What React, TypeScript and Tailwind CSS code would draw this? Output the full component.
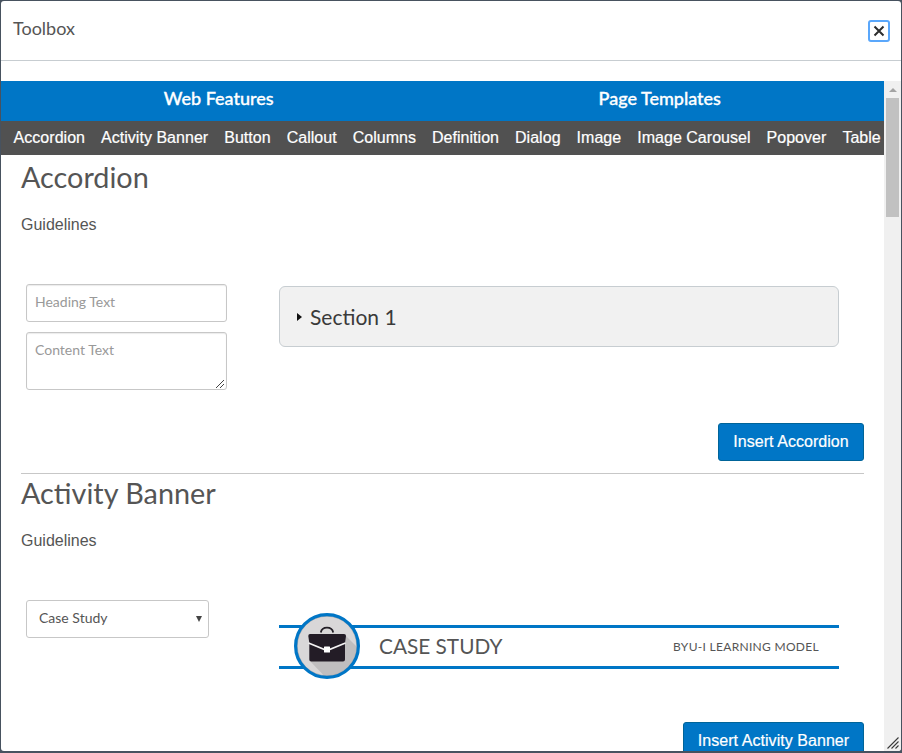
import React from "react";

const navItems = [
  "Accordion", "Activity Banner", "Button", "Callout", "Columns", "Definition",
  "Dialog", "Image", "Image Carousel", "Popover", "Table",
];

const lato = "font-['Lato','Liberation_Sans',sans-serif]";

function Grip({ className }: { className: string }) {
  return (
    <svg className={className} viewBox="0 0 9 9" width="9" height="9" shapeRendering="crispEdges">
      {[8, 7, 6, 5, 4, 3, 2, 1].map((n) => (
        <rect key={n} x={8 - n} y={n} width="1" height="1" fill="#444" />
      ))}
      {[8, 7, 6, 5].map((n) => (
        <rect key={n} x={12 - n} y={n} width="1" height="1" fill="#444" />
      ))}
    </svg>
  );
}

function DialogGrip() {
  return (
    <svg className="h-3 w-3" viewBox="0 0 12 12" fill="none" stroke="#3a3a3a" strokeWidth="1.1">
      <path d="M.5 11.5 11.5.5M4.5 11.5l7-7M8.5 11.5l3-3" />
    </svg>
  );
}

function Heading({ children }: { children: React.ReactNode }) {
  return <h2 className={`${lato} h-[43px] text-[28.8px] leading-[45px] text-[#555]`}>{children}</h2>;
}

function InsertButton({ label, width }: { label: string; width: string }) {
  return (
    <button className={`${width} h-[38px] rounded-[3px] border border-[#006499] bg-[#0076c6] text-center text-[16px] leading-[34px] tracking-[0.05px] whitespace-nowrap text-white [-webkit-text-stroke:0.2px_white]`}>
      {label}
    </button>
  );
}

function BriefcaseBadge() {
  return (
    <svg className="absolute top-[-15px] left-[15px] h-[66px] w-[66px]" viewBox="0 0 66 66">
      <defs>
        <clipPath id="disc"><circle cx="33" cy="33" r="30" /></clipPath>
      </defs>
      <circle cx="33" cy="33" r="31.5" fill="#d9d7d8" />
      <g clipPath="url(#disc)">
        <path d="M51 22 70 41V70H37L15 47Z" fill="#c0bebf" />
      </g>
      <circle cx="33" cy="33" r="29.8" fill="none" stroke="#b5afae" strokeWidth="1" />
      <circle cx="33" cy="33" r="31.4" fill="none" stroke="#0076c6" strokeWidth="3.200" />
      <path d="M26.8 19.5c.6-3 3-4.8 6.2-4.8s5.600 1.800 6.200 4.800" fill="none" stroke="#231f26" strokeWidth="1.8" />
      <path d="M16 21h34q2 0 2 2l-1 7v16.500q0 2-2 2H17.300q-2 0-2-2V30l-1-7q0-2 1.700-2Z" fill="#231c26" />
      <path d="M14.500 30 33 37.500 51.500 30" fill="none" stroke="#f4f2f3" strokeWidth="1.700" />
      <rect x="30" y="33.500" width="6" height="6" rx=".5" fill="#fff" />
    </svg>
  );
}

export default function App() {
  return (
    <div className="h-[753px] w-[902px] overflow-hidden bg-[#47525f] p-px pb-0.5 font-['Liberation_Sans',Arial,sans-serif] text-[#555]">
      <div className="flex h-[750px] flex-col overflow-hidden rounded-[3px] bg-white">
        <header className="flex h-[60px] shrink-0 items-start justify-between border-b border-[#c7cdd1] pr-[11px] pl-3">
          <span className={`${lato} mt-[15px] text-[18px] leading-6`}>Toolbox</span>
          <button className="mt-[19px] flex h-[22px] w-[22px] items-center justify-center rounded-[3px] border-2 border-[#5aa7fb] bg-white">
            <svg width="12" height="12" viewBox="0 0 12 12" stroke="#2d2d2d" strokeWidth="2" fill="none"><path d="M1.500 1.500 10.500 10.500M10.500 1.500 1.500 10.500" /></svg>
          </button>
        </header>
        <div className="mt-5 flex min-h-0 flex-1">
          <main className="w-[883px] overflow-hidden">
            <div className={`${lato} grid h-10 grid-cols-2 bg-[#0076c6] text-center text-[18px] leading-[35px] font-medium text-white [-webkit-text-stroke:0.35px_white]`}>
              <span className="pr-1.5">Web Features</span>
              <span className="pr-[7px]">Page Templates</span>
            </div>
            <nav className="flex h-[34px] gap-4 bg-[#515151] pl-[12.600px] text-[16px] leading-[33px] tracking-[0.03px] whitespace-nowrap text-white [-webkit-text-stroke:0.2px_white]">
              {navItems.map((n) => <span key={n}>{n}</span>)}
            </nav>

            <section className="mr-5 ml-5 h-[319px] border-b border-[#c7c7c7]">
              <Heading>Accordion</Heading>
              <p className="mt-[15px] h-6 text-[16px] leading-6">Guidelines</p>
              <div className="mt-[47px] flex h-[106px]">
                <div className="ml-[5px] flex w-[201px] flex-col gap-2.5">
                  <div className={`${lato} h-[38px] rounded-[3px] border border-[#c7c7c7] pl-2 text-[14px] leading-[33px] text-[#999] shadow-[inset_0_1px_1px_rgba(0,0,0,0.08)]`}>Heading Text</div>
                  <div className={`${lato} relative h-[58px] rounded-[3px] border border-[#c7c7c7] pl-2 text-[14px] leading-[33px] text-[#999] shadow-[inset_0_1px_1px_rgba(0,0,0,0.08)]`}>
                    Content Text
                    <Grip className="absolute right-px bottom-px" />
                  </div>
                </div>
                <div className={`${lato} mt-0.5 ml-[52px] flex h-[61px] w-[560px] items-center rounded-md border border-[#c7cdd1] bg-[#f1f1f1] pl-[17px] text-[21px] text-[#3a3a3a]`}>
                  <svg width="5" height="8" viewBox="0 0 5 8" fill="#111"><path d="M0 0v8l5-4Z" /></svg>
                  <span className="ml-2">Section 1</span>
                </div>
              </div>
              <div className="mt-[33px] flex justify-end">
                <InsertButton label="Insert Accordion" width="w-[146px]" />
              </div>
            </section>

            <section className="mr-5 ml-5">
              <div className="-mt-[3px]"><Heading>Activity Banner</Heading></div>
              <p className="mt-[15px] h-6 text-[16px] leading-6">Guidelines</p>
              <div className="mt-[47px] flex h-[106px]">
                <div className={`${lato} ml-[5px] flex h-[38px] w-[183px] items-start justify-between rounded-[3px] border border-[#c7c7c7] pr-1.5 pl-3 text-[14px] leading-[33px]`}>
                  Case Study
                  <svg className="mt-[15px]" width="6" height="6" viewBox="0 0 6 6" fill="#444"><path d="M0 0h6L3 6Z" /></svg>
                </div>
                <div className={`${lato} relative mt-[25px] ml-[70px] flex h-11 w-[560px] items-center justify-between border-y-[3px] border-[#0076c6] pr-5 pl-[100px]`}>
                  <BriefcaseBadge />
                  <span className="pb-0.5 text-[20.800px]">CASE STUDY</span>
                  <span className="text-[12px] tracking-[0.3px]">BYU-I LEARNING MODEL</span>
                </div>
              </div>
              <div className="mt-4 flex justify-end">
                <InsertButton label="Insert Activity Banner" width="w-[181px]" />
              </div>
            </section>
          </main>
          <aside className="flex w-[17px] flex-col items-center bg-[#f0f0f0]">
            <svg className="mt-[7px] h-1 w-2" viewBox="0 0 8 4" fill="#a3a3a3"><path d="M4 0 8 4H0Z" /></svg>
            <div className="mt-1.5 mr-px h-[119px] w-[13px] bg-[#c1c1c1]" />
            <div className="mt-auto mb-[2px]"><DialogGrip /></div>
          </aside>
        </div>
      </div>
    </div>
  );
}
